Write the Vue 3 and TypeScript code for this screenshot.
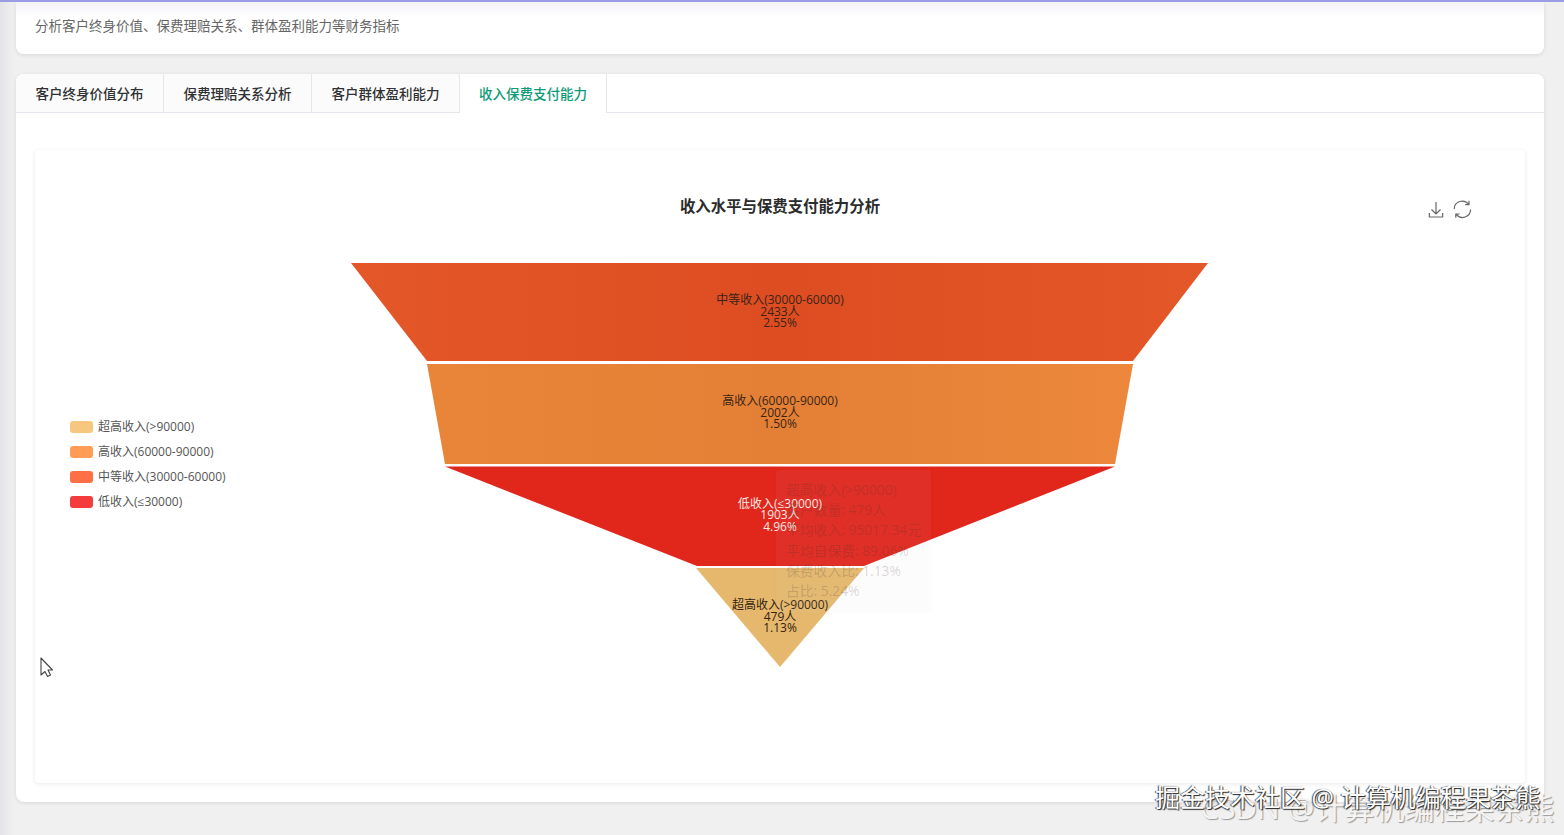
<script setup lang="ts">
const tabs = ['客户终身价值分布', '保费理赔关系分析', '客户群体盈利能力', '收入保费支付能力']
const activeTab = 3

const legend = [
  { name: '超高收入(>90000)', color: '#f8c77f', y: 421 },
  { name: '高收入(60000-90000)', color: '#ff9c55', y: 446 },
  { name: '中等收入(30000-60000)', color: '#ff6f45', y: 471 },
  { name: '低收入(≤30000)', color: '#f53c3c', y: 496 },
]

const segments = [
  { points: '351,263 1208,263 1133,361 427,361', fill: 'url(#seg1)', text: '#3a2418', y: 303.7, lines: ['中等收入(30000-60000)', '2433人', '2.55%'] },
  { points: '427,364 1133,364 1115,464 445,464', fill: 'url(#seg2)', text: '#3a2418', y: 404.8, lines: ['高收入(60000-90000)', '2002人', '1.50%'] },
  { points: '445,466.5 1115,466.5 864,566 697,566', fill: '#e1261c', text: '#fbe9e4', y: 507.6, lines: ['低收入(≤30000)', '1903人', '4.96%'] },
  { points: '696,568 864,568 780,667', fill: '#e6b86d', text: '#33230f', y: 608.8, lines: ['超高收入(>90000)', '479人', '1.13%'] },
]

const tooltip = ['超高收入(>90000)', '客户数量: 479人', '平均收入: 95017.34元', '平均自保费: 89.06%', '保费收入比: 1.13%', '占比: 5.24%']
</script>

<template>
  <div class="page">
    <header class="intro">分析客户终身价值、保费理赔关系、群体盈利能力等财务指标</header>

    <section class="panel">
      <nav class="tabs">
        <div v-for="(tab, i) in tabs" :key="tab" class="tab" :class="{ active: i === activeTab }">{{ tab }}</div>
      </nav>

      <div class="panel-body">
        <div class="chart-card">
          <svg class="chart" viewBox="35 150 1490 633" width="1490" height="633">
            <defs>
              <linearGradient id="seg1" x1="0" y1="0" x2="1" y2="0">
                <stop offset="0" stop-color="#e45728" />
                <stop offset="0.5" stop-color="#dd4d21" />
                <stop offset="1" stop-color="#e45728" />
              </linearGradient>
              <linearGradient id="seg2" x1="0" y1="0" x2="1" y2="0">
                <stop offset="0" stop-color="#e98539" />
                <stop offset="0.5" stop-color="#e38035" />
                <stop offset="1" stop-color="#ec873c" />
              </linearGradient>
            </defs>

            <text class="title" x="780" y="212" text-anchor="middle">收入水平与保费支付能力分析</text>

            <g class="tool">
              <path d="M1436 202v12M1431.5 209.5l4.5 4.5 4.5-4.5M1429.3 213v4h13.4v-4" />
              <path d="M1454.2 209a8 8 0 0 1 14.3-4.8M1470.6 209.6a8 8 0 0 1-14.3 4.8M1469 200.8v3.8h-3.8M1455.8 217.8v-3.8h3.8" />
            </g>

            <g v-for="item in legend" :key="item.name">
              <rect :x="70" :y="item.y" width="23" height="12" rx="3" :fill="item.color" />
              <text class="legend" x="98" :y="item.y + 9.5">{{ item.name }}</text>
            </g>

            <g v-for="seg in segments" :key="seg.lines[0]">
              <polygon :points="seg.points" :fill="seg.fill" />
              <text
                v-for="(line, n) in seg.lines"
                :key="line"
                class="label"
                x="780"
                :y="seg.y + n * 11.8"
                text-anchor="middle"
                :fill="seg.text"
              >{{ line }}</text>
            </g>

            <g class="cursor">
              <path d="M41 658v17l4-3.5 2.5 5 3-1.5-2.5-5h4.5z" />
            </g>
          </svg>

          <div class="ghost-tooltip">
            <div v-for="line in tooltip" :key="line">{{ line }}</div>
          </div>
        </div>
      </div>
    </section>

    <div class="mark-back">CSDN @计算机编程果茶熊</div>
    <div class="mark-front">掘金技术社区 @ 计算机编程果茶熊</div>
  </div>
</template>

<style scoped>
.page {
  position: relative;
  box-sizing: border-box;
  width: 1564px;
  height: 835px;
  overflow: hidden;
  padding: 0 20px 33px 16px;
  background: linear-gradient(90deg, #e4e4e8 0, #f0f0f1 14px);
  border-top: 2px solid #9a9ce6;
  font-family: "Open Sans", "Noto Sans CJK SC", sans-serif;
}
.intro {
  box-sizing: border-box;
  height: 52px;
  padding: 14px 19px 0;
  font-size: 13.5px;
  line-height: 20px;
  color: #666;
  background: linear-gradient(180deg, #f2f2f8 0, #fff 14px);
  border-radius: 0 0 8px 8px;
  box-shadow: 0 1px 4px rgba(0, 0, 0, 0.1);
}
.panel {
  margin-top: 20px;
  height: 728px;
  background: #fff;
  border-radius: 8px;
  box-shadow: 0 1px 4px rgba(0, 0, 0, 0.1);
  overflow: hidden;
}
.tabs {
  display: flex;
  height: 39px;
  box-sizing: border-box;
  background: #fff;
  border-bottom: 1px solid #e4e7ed;
}
.tab {
  box-sizing: border-box;
  width: 148px;
  height: 38px;
  line-height: 40px;
  text-align: center;
  font-size: 13.5px;
  font-weight: 500;
  color: #303133;
  background: #fbfbfb;
  border-right: 1px solid #e4e7ed;
}
.tab.active {
  height: 39px;
  margin-left: -1px;
  color: #0c9a78;
  background: #fff;
  border-left: 1px solid #e4e7ed;
}
.panel-body {
  padding: 37px 19px 19px;
}
.chart-card {
  position: relative;
  width: 1490px;
  height: 633px;
  background: #fff;
  border-radius: 4px;
  box-shadow: 0 1px 5px rgba(0, 0, 0, 0.09);
}
.chart {
  display: block;
}
.title {
  font-size: 15.4px;
  font-weight: 700;
  fill: #2c2c2c;
}
.tool path {
  fill: none;
  stroke: #666;
  stroke-width: 1.2;
}
.legend {
  font-size: 12px;
  fill: #555;
}
.label {
  font-size: 12px;
}
.cursor path {
  fill: #fff;
  stroke: #444;
  stroke-width: 1.1;
  stroke-linejoin: round;
}
.ghost-tooltip {
  position: absolute;
  left: 741px;
  top: 320px;
  box-sizing: border-box;
  width: 155px;
  height: 143px;
  padding: 10px 10px;
  font-size: 13.8px;
  line-height: 20.2px;
  white-space: nowrap;
  overflow: hidden;
  color: rgba(60, 50, 50, 0.2);
  background: rgba(200, 200, 210, 0.06);
  border-radius: 4px;
  box-shadow: 0 0 6px rgba(0, 0, 0, 0.015);
}
.mark-back {
  position: absolute;
  left: 1200px;
  top: 788px;
  font-size: 30px;
  line-height: 36px;
  white-space: nowrap;
  color: #f4f4f4;
  text-shadow: 1px 1px 1px #999;
}
.mark-front {
  position: absolute;
  left: 1155px;
  top: 777px;
  font-size: 25px;
  line-height: 36px;
  white-space: nowrap;
  color: #fff;
  text-shadow: 1px 1px 1px #222, -1px 0 1px #444;
}
</style>
